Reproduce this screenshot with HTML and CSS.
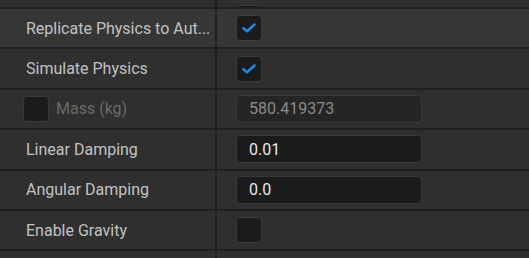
FILE: index.html
```html
<!DOCTYPE html>
<html lang="en">
<head>
  <meta charset="UTF-8">
  <title>Physics</title>
  <link rel="stylesheet" href="styles.css">
</head>
<body>

  <div class="details">

    <div class="row stub">
      <div class="name"></div>
      <div class="value"><span class="box"></span></div>
    </div>

    <div class="row hover">
      <div class="name"><span class="label">Replicate Physics to Aut...</span></div>
      <div class="value">
        <span class="box">
          <svg viewBox="0 0 14 10" class="tick"><path d="M1.5 5.2 L5 8.3 L12.5 1.5"/></svg>
        </span>
      </div>
    </div>

    <div class="row">
      <div class="name"><span class="label">Simulate Physics</span></div>
      <div class="value">
        <span class="box">
          <svg viewBox="0 0 14 10" class="tick"><path d="M1.5 5.2 L5 8.3 L12.5 1.5"/></svg>
        </span>
      </div>
    </div>

    <div class="row">
      <div class="name inline">
        <span class="box"></span>
        <span class="label off">Mass (kg)</span>
      </div>
      <div class="value"><span class="field off">580.419373</span></div>
    </div>

    <div class="row">
      <div class="name"><span class="label">Linear Damping</span></div>
      <div class="value"><span class="field">0.01</span></div>
    </div>

    <div class="row">
      <div class="name"><span class="label">Angular Damping</span></div>
      <div class="value"><span class="field">0.0</span></div>
    </div>

    <div class="row">
      <div class="name"><span class="label">Enable Gravity</span></div>
      <div class="value"><span class="box"></span></div>
    </div>

    <div class="row">
      <div class="name"></div>
      <div class="value"></div>
    </div>

  </div>

</body>
</html>
```

FILE: styles.css
```css
    body {
      margin: 0;
      padding: 0;
      background-color: #2f2f2f;
      font-family: Roboto, "Liberation Sans", sans-serif;
      font-size: 16px;
      overflow: hidden;
    }

    .details {
      display: flex;
      flex-direction: column;
    }

    .row {
      display: flex;
      height: 38.4px;
      background-color: #2f2f2f;
      border-bottom: 2px solid #202020;
    }

    .row.hover {
      background-color: #363636;
    }

    .row.stub {
      height: 7px;
      overflow: hidden;
    }

    .stub .value {
      align-items: flex-end;
    }

    .stub .box {
      margin-bottom: -24px;
    }

    .name {
      width: 217px;
      flex: none;
      display: flex;
      align-items: center;
      padding-left: 26px;
      padding-right: 6px;
      box-sizing: border-box;
      border-right: 2px solid #202020;
    }

    .name.inline {
      padding-left: 23px;
      gap: 7px;
    }

    .label {
      color: #c2c2c2;
      white-space: nowrap;
    }

    .label.off {
      color: #6a6a6a;
    }

    .value {
      flex: 1;
      display: flex;
      align-items: center;
      padding-left: 19px;
    }

    .box {
      width: 26px;
      height: 26px;
      box-sizing: border-box;
      background-color: #1b1b1b;
      border: 1px solid #3a3a3a;
      border-radius: 4px;
      display: flex;
      align-items: center;
      justify-content: center;
      flex: none;
    }

    .tick {
      width: 14px;
      height: 10px;
    }

    .tick path {
      fill: none;
      stroke: #1a86e8;
      stroke-width: 2.6;
      stroke-linecap: round;
      stroke-linejoin: round;
    }

    .field {
      width: 186px;
      height: 28px;
      box-sizing: border-box;
      background-color: #1b1b1b;
      border: 1px solid #393939;
      border-radius: 4px;
      padding-left: 12px;
      display: flex;
      align-items: center;
      color: #e8e8e8;
    }

    .field.off {
      background-color: #252525;
      color: #8a8a8a;
    }
```
